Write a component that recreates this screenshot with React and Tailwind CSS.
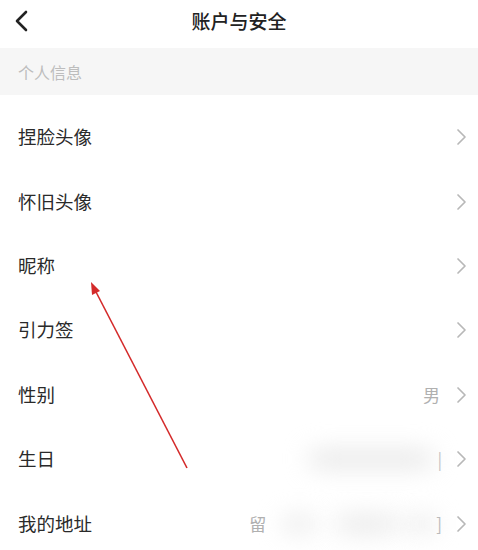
const rows = [
  { label: '捏脸头像' },
  { label: '怀旧头像' },
  { label: '昵称' },
  { label: '引力签' },
  { label: '性别', value: '男' },
  { label: '生日', blur: 'birthday' },
  { label: '我的地址', blur: 'address' },
];

function Chevron() {
  return (
    <svg width="11" height="18" viewBox="0 0 11 18" className="shrink-0">
      <path d="M2 2 L9 9 L2 16" fill="none" stroke="#b8b8b8" strokeWidth="1.7" strokeLinecap="round" strokeLinejoin="round" />
    </svg>
  );
}

function RowValue({ row }) {
  if (row.value) {
    return <span className="text-[17px] text-[#b0b0b0] mr-[16px]">{row.value}</span>;
  }
  if (row.blur === 'birthday') {
    return (
      <div className="flex items-center mr-[14px]">
        <div className="w-[124px] h-[16px] rounded-full bg-[#e4e4e4] blur-md" />
        <span className="text-[17px] text-[#c0c0c0] ml-[4px]">|</span>
      </div>
    );
  }
  if (row.blur === 'address') {
    return (
      <div className="flex items-center mr-[14px]">
        <span className="text-[17px] text-[#b0b0b0] mr-[16px]">留</span>
        <div className="w-[34px] h-[14px] rounded-full bg-[#e6e6e6] blur-md" />
        <div className="w-[62px] h-[16px] rounded-full bg-[#e6e6e6] blur-md ml-[20px]" />
        <div className="w-[30px] h-[14px] rounded-full bg-[#e6e6e6] blur-md ml-[8px]" />
        <span className="text-[17px] text-[#b5b5b5]">]</span>
      </div>
    );
  }
  return null;
}

export default function App() {
  return (
    <div
      className="relative w-[478px] h-[550px] overflow-hidden bg-white"
      style={{ fontFamily: '"Noto Sans CJK SC", "Noto Sans", sans-serif' }}
    >
      {/* header */}
      <div className="relative h-[48px] flex items-center justify-center">
        <svg className="absolute left-[13px] top-[10px]" width="18" height="22" viewBox="0 0 18 22">
          <path d="M13 2 L4 11 L13 20" fill="none" stroke="#222" strokeWidth="2.6" strokeLinecap="round" strokeLinejoin="round" />
        </svg>
        <span className="text-[19px] text-[#222] font-medium -mt-[6px]">账户与安全</span>
      </div>

      {/* section */}
      <div className="h-[47px] bg-[#f6f6f6] flex items-center px-[18px]">
        <span className="text-[16px] text-[#bdbdbd]">个人信息</span>
      </div>

      <div className="pt-[10px]">
        {rows.map((row) => (
          <div key={row.label} className="h-[64.4px] flex items-center pl-[18px] pr-[11px]">
            <span className="text-[18.5px] text-[#2a2a2a] flex-1">{row.label}</span>
            <RowValue row={row} />
            <Chevron />
          </div>
        ))}
      </div>

      {/* annotation arrow */}
      <svg className="absolute left-0 top-0 pointer-events-none" width="478" height="550">
        <line x1="187" y1="468" x2="95" y2="290" stroke="#d42a2a" strokeWidth="1.6" />
        <polygon points="91,282 92,295 100,291" fill="#d42a2a" />
      </svg>
    </div>
  );
}
